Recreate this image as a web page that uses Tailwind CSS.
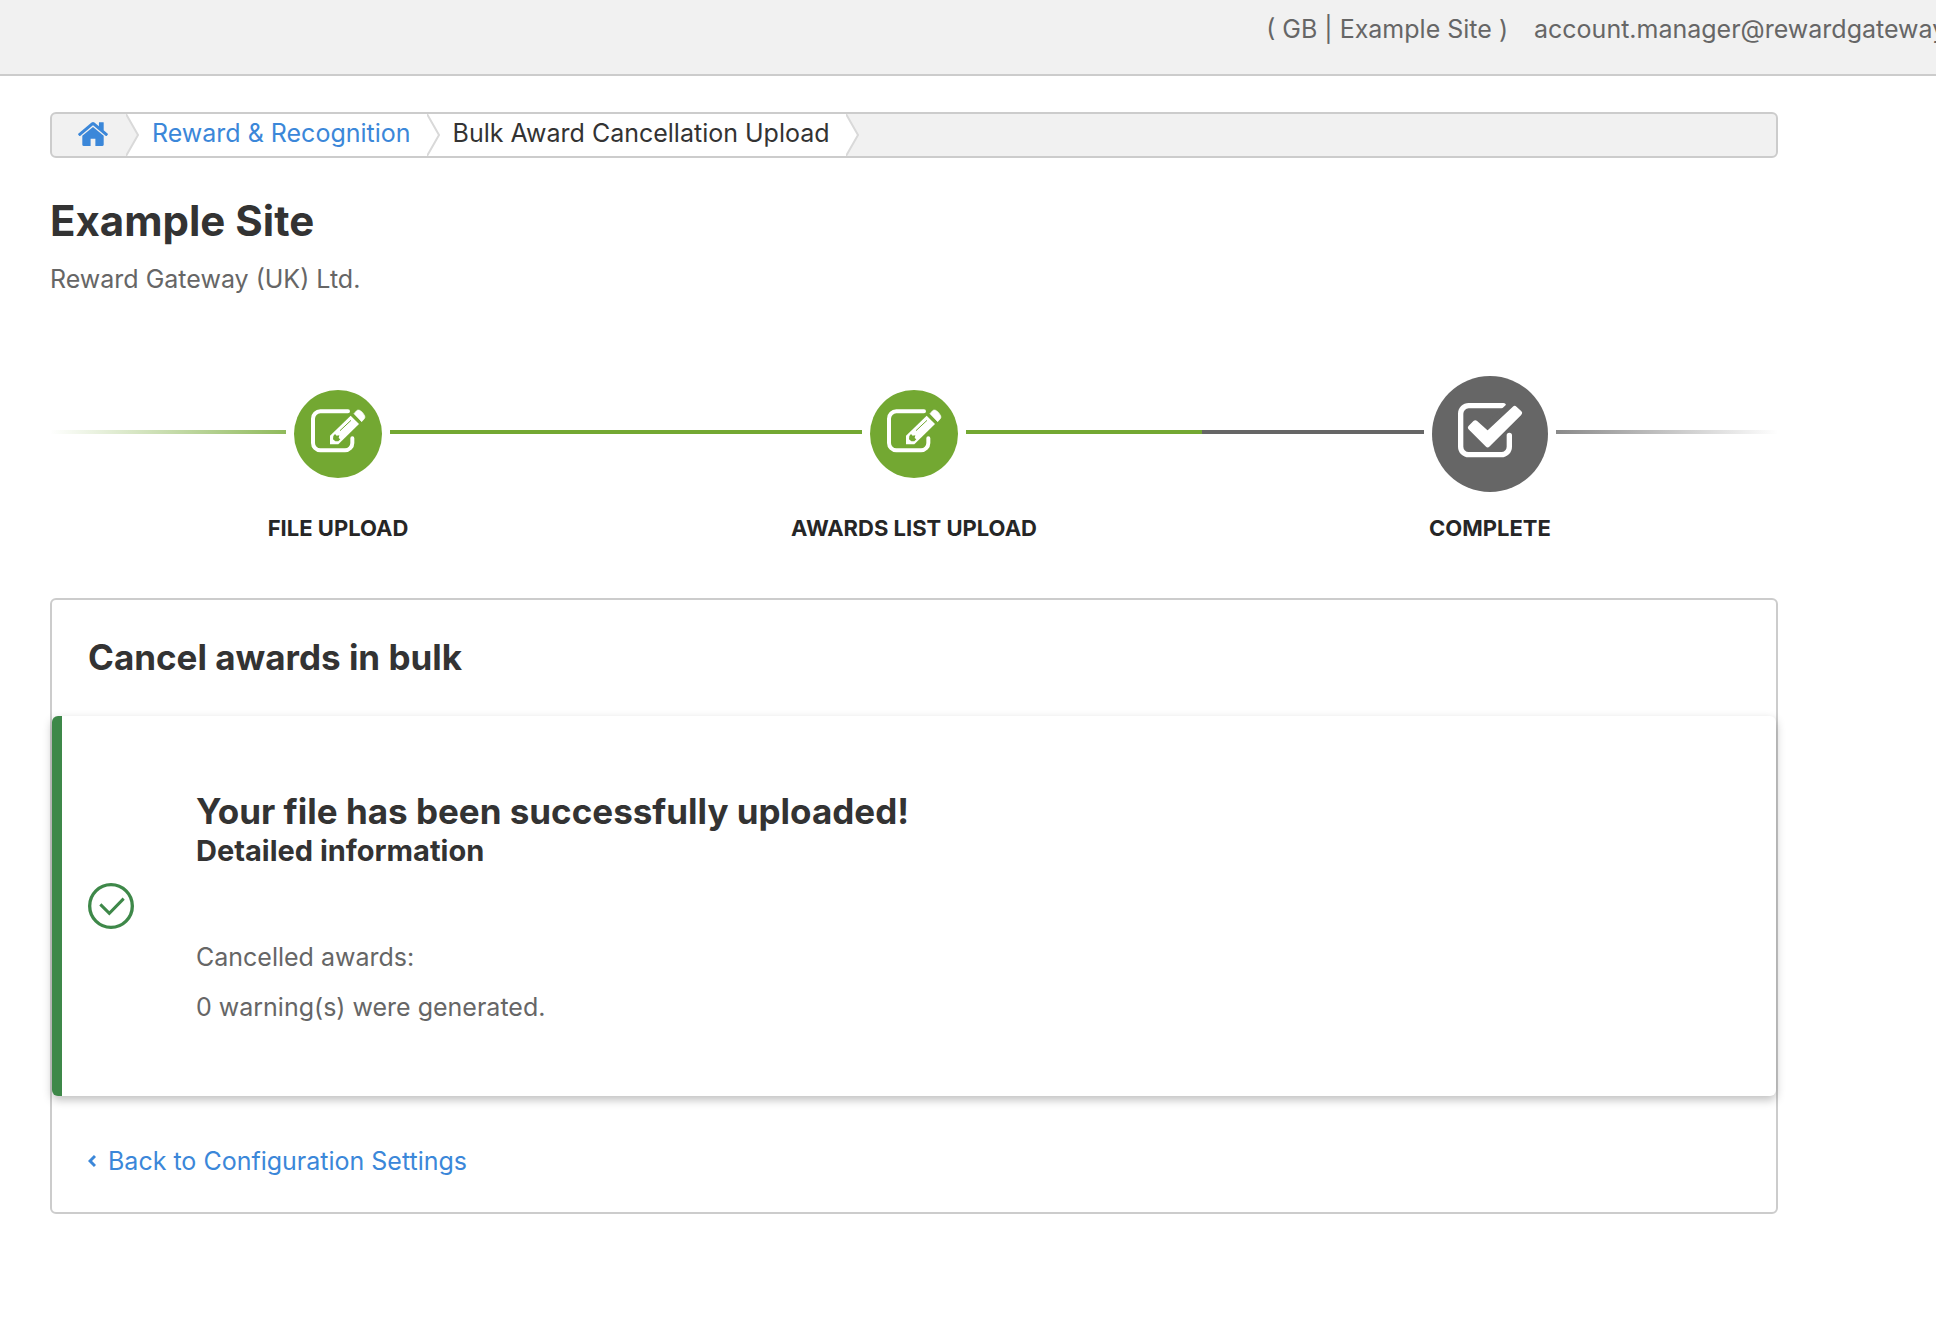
<!DOCTYPE html>
<html lang="en">
<head>
<meta charset="utf-8">
<title>Bulk Award Cancellation Upload</title>
<script src="https://cdn.jsdelivr.net/npm/@tailwindcss/browser@4"></script>
</head>
<body class="min-h-screen overflow-x-hidden bg-white font-['Inter',sans-serif] text-[25px] leading-[50px] text-[#666]">
  <!-- Shared step icon -->
  <svg class="hidden" aria-hidden="true">
    <symbol id="edit" viewBox="0 0 264 264">
      <path d="M162 64H79a22 22 0 0 0-22 22v73a22 22 0 0 0 22 22h74a22 22 0 0 0 22-22v-14" fill="none" stroke="#fff" stroke-width="12" stroke-linecap="round"/>
      <path d="M108 137L170 77L195 102L133 163H108Z" fill="#fff"/>
      <path d="M180 71L187 63Q191 58 197 61Q207 66 212 77Q214 82 211 86L203 95Z" fill="#fff" stroke="#fff" stroke-width="2" stroke-linejoin="round"/>
      <path d="M138 122L171 91" stroke="#73a832" stroke-width="3"/>
      <path d="M118 138L123 132L128 137L136 136L134 144L139 148L133 154H124L117 148Z" fill="#73a832"/>
    </symbol>
  </svg>

  <header class="flex h-[76px] items-start justify-end gap-[26px] overflow-hidden border-b-2 border-[#ccc] bg-[#f1f1f1] pt-3.5 leading-[30px] whitespace-nowrap">
    <span>( GB | Example Site )</span>
    <span class="w-[402px] shrink-0">account.manager@rewardgateway</span>
  </header>

  <main class="mr-[158px] ml-[50px] pt-9">
    <nav aria-label="Breadcrumb">
      <ol class="flex h-[46px] overflow-hidden rounded-md border-2 border-[#ccc] bg-[#f1f1f1] leading-[38px] whitespace-nowrap">
        <li class="flex">
          <a href="#" aria-label="Home" class="pt-2 pr-[18px] pl-[26px] text-[#3b87d9]">
            <svg class="h-6 w-[30px]" viewBox="88 250 1616 1290" fill="currentColor"><path d="M1472 992v480q0 26-19 45t-45 19h-384v-384h-256v384h-384q-26 0-45-19t-19-45v-480q0-1 .5-3t.5-3l575-474 575 474q1 2 1 6zm223-69l-62 74q-8 9-21 11h-3q-13 0-21-7l-692-577-692 577q-12 8-24 7-13-2-21-11l-62-74q-8-10-7-23.5t11-21.5l719-599q32-26 76-26t76 26l244 204v-195q0-14 9-23t23-9h192q14 0 23 9t9 23v408l219 182q10 8 11 21.5t-7 23.5z"/></svg>
          </a>
          <svg class="h-[42px] w-3.5 bg-white" viewBox="0 0 14 42"><path d="M0 0L12 21L0 42" fill="#f1f1f1" stroke="#d9d9d9" stroke-width="2"/></svg>
        </li>
        <li class="flex bg-white">
          <a href="#" class="pr-4 pl-3 text-[#3b87d9]">Reward &amp; Recognition</a>
          <svg class="h-[42px] w-3.5" viewBox="0 0 14 42"><path d="M0 0L12 21L0 42" fill="none" stroke="#d9d9d9" stroke-width="2"/></svg>
        </li>
        <li class="flex bg-white text-[#333]">
          <span class="pr-4 pl-3" aria-current="page">Bulk Award Cancellation Upload</span>
          <svg class="h-[42px] w-3.5 bg-[#f1f1f1]" viewBox="0 0 14 42"><path d="M0 0L12 21L0 42" fill="#fff" stroke="#d9d9d9" stroke-width="2"/></svg>
        </li>
      </ol>
    </nav>

    <h1 class="mt-9 text-[42px] leading-[54px] font-bold text-[#333]">Example Site</h1>
    <p class="mt-1.5">Reward Gateway (UK) Ltd.</p>

    <ol class="mt-[72px] grid grid-cols-3 text-center text-[22px] leading-7 font-bold text-[#262626]">
      <li>
        <div class="flex h-[116px] items-center gap-2">
          <span class="mb-1 h-1 flex-1 bg-linear-to-r from-[#73a832]/0 to-[#73a832]/80"></span>
          <svg class="size-[88px] rounded-full bg-[#73a832]"><use href="#edit"/></svg>
          <span class="mb-1 h-1 flex-1 bg-[#73a832]"></span>
        </div>
        <p class="mt-[22px]">FILE UPLOAD</p>
      </li>
      <li>
        <div class="flex h-[116px] items-center gap-2">
          <span class="mb-1 h-1 flex-1 bg-[#73a832]"></span>
          <svg class="size-[88px] rounded-full bg-[#73a832]"><use href="#edit"/></svg>
          <span class="mb-1 h-1 flex-1 bg-[#73a832]"></span>
        </div>
        <p class="mt-[22px]">AWARDS LIST UPLOAD</p>
      </li>
      <li aria-current="step">
        <div class="flex h-[116px] items-center gap-2">
          <span class="mb-1 h-1 flex-1 bg-[#666]"></span>
          <svg class="size-[116px] rounded-full bg-[#666]" viewBox="0 0 348 348">
            <path d="M214 89H110a24 24 0 0 0-24 24v99a24 24 0 0 0 24 24h98a24 24 0 0 0 24-24v-34" fill="none" stroke="#fff" stroke-width="16" stroke-linecap="round"/>
            <path d="M167 165L248 90" stroke="#666" stroke-width="40"/>
            <path d="M116 155L130 141L167 174L248 98L262 111L167 206Z" fill="#fff" stroke="#fff" stroke-width="16" stroke-linejoin="round"/>
          </svg>
          <span class="mb-1 h-1 flex-1 bg-linear-to-r from-[#666]/77 to-[#666]/0"></span>
        </div>
        <p class="mt-[22px]">COMPLETE</p>
      </li>
    </ol>

    <section class="mt-14 mb-[120px] rounded-md border-2 border-[#ccc]">
      <h2 class="px-9 pt-[34px] pb-9 text-[35px] leading-[46px] font-bold text-[#333]">Cancel awards in bulk</h2>
      <div role="status" class="flex items-center rounded-md border-l-[10px] border-[#3e8849] bg-white pl-[26px] shadow-[0_4px_10px_rgba(0,0,0,0.25)]">
        <svg class="size-[46px] shrink-0" viewBox="0 0 138 138" fill="none" stroke="#3e8849">
          <circle cx="69" cy="69" r="64" stroke-width="10"/>
          <path d="M37 64L64 91L107 47" stroke-width="9"/>
        </svg>
        <div class="pt-[76px] pb-16 pl-[62px]">
          <h3 class="text-[35px] leading-[38px] font-bold text-[#333]">Your file has been successfully uploaded!</h3>
          <h4 class="mb-[60px] text-[29px] leading-[42px] font-bold text-[#333]">Detailed information</h4>
          <p>Cancelled awards:</p>
          <p>0 warning(s) were generated.</p>
        </div>
      </div>
      <a href="#" class="mx-9 mt-10 mb-[26px] flex w-fit items-center gap-3 text-[#3b87d9]">
        <svg class="h-3.5 w-2" viewBox="0 0 8 14" fill="none" stroke="currentColor" stroke-width="3"><path d="M7 2L2 7L7 12"/></svg>
        Back to Configuration Settings
      </a>
    </section>
  </main>
</body>
</html>
